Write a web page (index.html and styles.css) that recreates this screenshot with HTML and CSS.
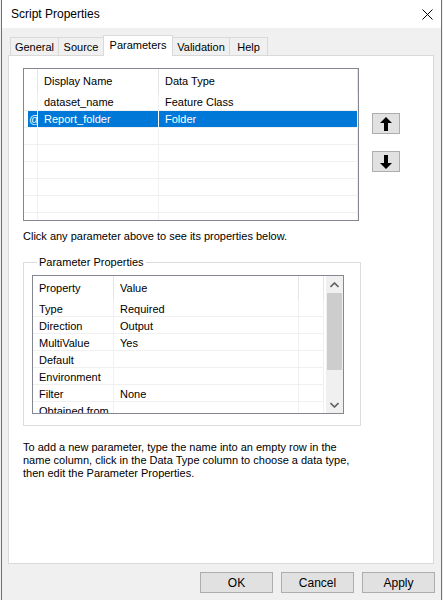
FILE: index.html
```html
<!DOCTYPE html>
<html lang="en">
  <head>
    <meta charset="UTF-8" />
    <title>Script Properties</title>
    <link rel="stylesheet" href="styles.css">
  </head>
  <body>
    <div class="window">
      <div class="titlebar">
        <span class="title">Script Properties</span>
        <svg class="close" width="11" height="11" viewBox="0 0 11 11">
          <path d="M0.5 0.5L10.5 10.5M10.5 0.5L0.5 10.5" stroke="#000" stroke-width="1" fill="none" />
        </svg>
      </div>

      <div class="content">
        <!-- Tab strip -->
        <div class="tabs">
          <div class="tab">General</div>
          <div class="tab">Source</div>
          <div class="tab active">Parameters</div>
          <div class="tab">Validation</div>
          <div class="tab last">Help</div>
        </div>

        <div class="panel">
          <!-- Parameter list + move buttons -->
          <div class="params-row">
            <div class="grid params">
              <div class="row head">
                <div class="cell rh"></div>
                <div class="cell">Display Name</div>
                <div class="cell">Data Type</div>
              </div>
              <div class="row">
                <div class="cell rh"></div>
                <div class="cell">dataset_name</div>
                <div class="cell">Feature Class</div>
              </div>
              <div class="row selected">
                <div class="cell rh"><span class="marker">@</span></div>
                <div class="cell">Report_folder</div>
                <div class="cell">Folder</div>
              </div>
              <div class="row"><div class="cell rh"></div><div class="cell"></div><div class="cell"></div></div>
              <div class="row"><div class="cell rh"></div><div class="cell"></div><div class="cell"></div></div>
              <div class="row"><div class="cell rh"></div><div class="cell"></div><div class="cell"></div></div>
              <div class="row"><div class="cell rh"></div><div class="cell"></div><div class="cell"></div></div>
              <div class="row"><div class="cell rh"></div><div class="cell"></div><div class="cell"></div></div>
              <div class="row"><div class="cell rh"></div><div class="cell"></div><div class="cell"></div></div>
            </div>
            <div class="movers">
              <button class="mover" title="Move up">
                <svg width="12" height="14" viewBox="0 0 12 14"><path d="M6 0L12 6H8V14H4V6H0Z" fill="#000" /></svg>
              </button>
              <button class="mover" title="Move down">
                <svg width="12" height="14" viewBox="0 0 12 14"><path d="M6 14L12 8H8V0H4V8H0Z" fill="#000" /></svg>
              </button>
            </div>
          </div>

          <p class="hint">Click any parameter above to see its properties below.</p>

          <!-- Parameter Properties -->
          <fieldset class="group">
            <legend>Parameter Properties</legend>
            <div class="grid props">
              <div class="props-body">
                <div class="prow head">
                  <div class="cell">Property</div>
                  <div class="cell">Value</div>
                  <div class="cell"></div>
                </div>
                <div class="prow"><div class="cell">Type</div><div class="cell">Required</div><div class="cell"></div></div>
                <div class="prow"><div class="cell">Direction</div><div class="cell">Output</div><div class="cell"></div></div>
                <div class="prow"><div class="cell">MultiValue</div><div class="cell">Yes</div><div class="cell"></div></div>
                <div class="prow"><div class="cell">Default</div><div class="cell"></div><div class="cell"></div></div>
                <div class="prow"><div class="cell">Environment</div><div class="cell"></div><div class="cell"></div></div>
                <div class="prow"><div class="cell">Filter</div><div class="cell">None</div><div class="cell"></div></div>
                <div class="prow"><div class="cell">Obtained from</div><div class="cell"></div><div class="cell"></div></div>
              </div>
              <div class="scrollbar">
                <svg class="sb-arrow" width="9" height="6" viewBox="0 0 9 6"><path d="M0.5 5L4.5 1L8.5 5" stroke="#606060" stroke-width="1.6" fill="none" /></svg>
                <div class="sb-track"><div class="sb-thumb"></div></div>
                <svg class="sb-arrow" width="9" height="6" viewBox="0 0 9 6"><path d="M0.5 1L4.5 5L8.5 1" stroke="#606060" stroke-width="1.6" fill="none" /></svg>
              </div>
            </div>
          </fieldset>

          <p class="help">To add a new parameter, type the name into an empty row in the name column, click in the Data Type column to choose a data type, then edit the Parameter Properties.</p>
        </div>

        <div class="actions">
          <button class="btn">OK</button>
          <button class="btn">Cancel</button>
          <button class="btn">Apply</button>
        </div>
      </div>
    </div>
  </body>
</html>
```

FILE: styles.css
```css
* {
  box-sizing: border-box;
}
body {
  margin: 0;
  background: #f0f0f0;
  font-family: "Liberation Sans", Arial, sans-serif;
  font-size: 11px;
  color: #000;
}
.window {
  width: 441px;
  height: 600px;
  margin-left: 1px;
  border-left: 1px solid #707070;
  border-right: 1px solid #707070;
  display: flex;
  flex-direction: column;
}
.titlebar {
  height: 28px;
  background: #fff;
  display: flex;
  align-items: center;
  justify-content: space-between;
  padding: 0 8px 0 9px;
}
.title {
  font-size: 12px;
}
.close {
  display: block;
}
.content {
  flex: 1;
  padding: 7px 7px 0 6px;
}

/* tabs */
.tabs {
  display: flex;
  align-items: flex-end;
  height: 20px;
  padding-left: 2px;
}
.tab {
  height: 18px;
  line-height: 18px;
  text-align: center;
  border: 1px solid #d9d9d9;
  border-bottom: none;
  border-right: none;
  background: #f0f0f0;
}
.tab:nth-child(1) { width: 48px; }
.tab:nth-child(2) { width: 45px; }
.tab:nth-child(4) { width: 56px; border-left: none; }
.tab:nth-child(5) { width: 39px; }
.tab.last {
  border-right: 1px solid #d9d9d9;
}
.tab.active {
  width: 70px;
  height: 21px;
  margin-bottom: -1px;
  line-height: 18px;
  background: #fff;
  border-right: 1px solid #d9d9d9;
  position: relative;
}
.panel {
  height: 509px;
  background: #fff;
  border: 1px solid #d9d9d9;
  padding: 12px 14px 0 14px;
}

/* data grids */
.params-row {
  display: flex;
  align-items: flex-start;
}
.grid {
  border: 1px solid #828790;
  background: #fff;
  overflow: hidden;
}
.params {
  width: 336px;
  height: 153px;
}
.row {
  display: grid;
  grid-template-columns: 14px 121px 199px;
  height: 17px;
}
.row .cell {
  border-right: 1px solid #f0f0f0;
  border-bottom: 1px solid #f0f0f0;
  padding: 1px 0 0 6px;
  line-height: 15px;
  white-space: nowrap;
  overflow: hidden;
}
.row.head {
  height: 25px;
}
.row.head .cell {
  border-bottom: none;
  border-right-color: #e5e5e5;
  padding-top: 0;
  line-height: 25px;
}
.row .cell.rh {
  padding-left: 4px;
  padding-top: 0;
}
.row.selected .cell {
  background: #0078d7;
  color: #fff;
  border-right-color: #fff;
}
.row.selected .cell.rh {
  background: #fff;
}
.marker {
  display: block;
  height: 16px;
  line-height: 17px;
  background: #0078d7;
  color: #fff;
  overflow: hidden;
  padding-left: 1px;
}
.movers {
  display: flex;
  flex-direction: column;
  gap: 17px;
  margin: 45px 0 0 13px;
}
.mover,
.btn {
  background: #e1e1e1;
  border: 1px solid #adadad;
  font: inherit;
  font-size: 12px;
  color: #000;
  padding: 0;
}
.mover {
  width: 28px;
  height: 21px;
  display: flex;
  align-items: center;
  justify-content: center;
}
.mover svg {
  display: block;
}
.hint {
  margin: 9px 0 0 0;
  line-height: 13px;
}

/* parameter properties group */
.group {
  width: 338px;
  margin: 12px 0 0 0;
  padding: 6px 0 11px 8px;
  border: 1px solid #dcdcdc;
}
.group legend {
  padding: 0 2px;
  margin-left: 5px;
  line-height: 14px;
}
.props {
  width: 312px;
  height: 139px;
  display: flex;
}
.props-body {
  flex: 1;
}
.prow {
  display: grid;
  grid-template-columns: 81px 185px 25px;
  height: 17px;
}
.prow .cell {
  border-right: 1px solid #f0f0f0;
  border-bottom: 1px solid #f0f0f0;
  padding: 2px 0 0 6px;
  line-height: 14px;
  white-space: nowrap;
  overflow: hidden;
}
.prow.head {
  height: 24px;
}
.prow.head .cell {
  border-bottom: none;
  border-right-color: #e5e5e5;
  padding-top: 1px;
  line-height: 23px;
}
.scrollbar {
  width: 17px;
  background: #f0f0f0;
  display: flex;
  flex-direction: column;
  align-items: center;
}
.sb-arrow {
  display: block;
  margin: 6px 0 5px;
}
.sb-track {
  flex: 1;
  width: 100%;
  padding: 0 1px;
}
.sb-thumb {
  height: 77px;
  background: #cdcdcd;
}
.help {
  margin: 15px 0 0 0;
  line-height: 13px;
  width: 335px;
}

/* dialog buttons */
.actions {
  display: flex;
  justify-content: flex-end;
  gap: 8px;
  margin: 8px -1px 0 0;
}
.btn {
  width: 73px;
  height: 21px;
}
```
